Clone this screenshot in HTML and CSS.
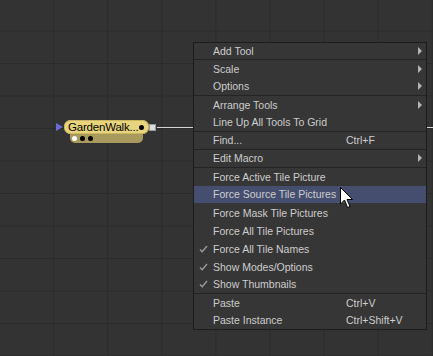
FILE: index.html
```html
<!DOCTYPE html>
<html lang="en">
<head>
  <meta charset="UTF-8">
  <meta name="viewport" content="width=device-width, initial-scale=1.0">
  <title>Flow - Context Menu</title>
  <link rel="stylesheet" href="styles.css">
</head>
<body>
  <!-- Flow canvas -->
  <div class="flow" id="flow">
    <div class="wire"></div>

    <!-- Loader node -->
    <div class="node">
      <span class="node-input"></span>
      <div class="node-tile">
        <span class="node-name">GardenWalk...</span>
        <span class="dot dot-black"></span>
      </div>
      <span class="node-output"></span>
      <div class="node-modes">
        <span class="dot dot-white"></span>
        <span class="dot dot-black"></span>
        <span class="dot dot-black"></span>
      </div>
    </div>

    <!-- Right click menu -->
    <ul class="menu">
      <li class="sep"><span class="check"></span><span class="label">Add Tool</span><span class="key"></span><span class="arrow"></span></li>
      <li><span class="check"></span><span class="label">Scale</span><span class="key"></span><span class="arrow"></span></li>
      <li class="sep"><span class="check"></span><span class="label">Options</span><span class="key"></span><span class="arrow"></span></li>
      <li><span class="check"></span><span class="label">Arrange Tools</span><span class="key"></span><span class="arrow"></span></li>
      <li class="sep"><span class="check"></span><span class="label">Line Up All Tools To Grid</span><span class="key"></span><span></span></li>
      <li class="sep"><span class="check"></span><span class="label">Find...</span><span class="key">Ctrl+F</span><span></span></li>
      <li class="sep"><span class="check"></span><span class="label">Edit Macro</span><span class="key"></span><span class="arrow"></span></li>
      <li><span class="check"></span><span class="label">Force Active Tile Picture</span><span class="key"></span><span></span></li>
      <li class="hover"><span class="check"></span><span class="label">Force Source Tile Pictures</span><span class="key"></span><span></span></li>
      <li><span class="check"></span><span class="label">Force Mask Tile Pictures</span><span class="key"></span><span></span></li>
      <li><span class="check"></span><span class="label">Force All Tile Pictures</span><span class="key"></span><span></span></li>
      <li class="checked"><span class="check"><svg width="9" height="8" viewBox="0 0 9 8"><path d="M1 4.5 L3.2 6.8 L8 1" fill="none" stroke="#9a9a9a" stroke-width="1.4"/></svg></span><span class="label">Force All Tile Names</span><span class="key"></span><span></span></li>
      <li class="checked"><span class="check"><svg width="9" height="8" viewBox="0 0 9 8"><path d="M1 4.5 L3.2 6.8 L8 1" fill="none" stroke="#9a9a9a" stroke-width="1.4"/></svg></span><span class="label">Show Modes/Options</span><span class="key"></span><span></span></li>
      <li class="checked sep"><span class="check"><svg width="9" height="8" viewBox="0 0 9 8"><path d="M1 4.5 L3.2 6.8 L8 1" fill="none" stroke="#9a9a9a" stroke-width="1.4"/></svg></span><span class="label">Show Thumbnails</span><span class="key"></span><span></span></li>
      <li><span class="check"></span><span class="label">Paste</span><span class="key">Ctrl+V</span><span></span></li>
      <li><span class="check"></span><span class="label">Paste Instance</span><span class="key">Ctrl+Shift+V</span><span></span></li>
    </ul>

    <!-- Mouse pointer -->
    <svg class="cursor" width="14" height="22" viewBox="0 0 14 22">
      <path d="M0.5 0.5 L0.5 17 L4.5 13 L7.5 20.5 L10 19.5 L7 12.5 L12.5 12.5 Z" fill="#fff" stroke="#000" stroke-width="1"/>
    </svg>
  </div>
</body>
</html>
```

FILE: styles.css
```css
body {
  margin: 0;
  padding: 0;
  background-color: #333;
  font-family: "Liberation Sans", Arial, sans-serif;
}
.flow {
  position: relative;
  width: 433px;
  height: 356px;
  overflow: hidden;
  background-color: #333;
  background-image:
    linear-gradient(to right, #2b2b2b 1px, transparent 1px),
    linear-gradient(to bottom, #2b2b2b 1px, transparent 1px);
  background-size: 54.1px 32.5px;
  background-position: -1px -2px;
}
.wire {
  position: absolute;
  left: 157px;
  top: 127px;
  width: 276px;
  height: 1px;
  background-color: #d4d4d4;
}

/* node */
.node {
  position: absolute;
  left: 56px;
  top: 120px;
  width: 101px;
  height: 24px;
}
.node-input {
  position: absolute;
  left: 0;
  top: 3px;
  width: 0;
  height: 0;
  border-top: 4px solid transparent;
  border-bottom: 4px solid transparent;
  border-left: 7px solid #6b6bd6;
}
.node-tile {
  position: absolute;
  left: 8px;
  top: 0;
  width: 85px;
  height: 14px;
  box-sizing: border-box;
  padding: 0 4px 0 3px;
  display: flex;
  align-items: center;
  justify-content: space-between;
  background-color: #e8d47c;
  border: 1px solid #c9b660;
  border-radius: 6px;
  z-index: 1;
}
.node-name {
  font-size: 11.5px;
  line-height: 12px;
  color: #000;
  letter-spacing: -0.2px;
}
.node-output {
  position: absolute;
  left: 93px;
  top: 4px;
  width: 7px;
  height: 7px;
  background-color: #dcdcdc;
  border: 1px solid #9a9a9a;
  box-sizing: border-box;
}
.node-modes {
  position: absolute;
  left: 14px;
  top: 12px;
  width: 73px;
  height: 11px;
  box-sizing: border-box;
  padding: 2px 0 0 2px;
  display: flex;
  align-items: center;
  gap: 3px;
  background-color: #a89a5c;
  border-radius: 0 0 5px 5px;
}
.dot {
  width: 5px;
  height: 5px;
  border-radius: 50%;
}
.dot-black {
  background-color: #000;
}
.dot-white {
  background-color: #fff;
}

/* menu */
.menu {
  position: absolute;
  left: 193px;
  top: 42px;
  width: 234px;
  margin: 0;
  padding: 0;
  list-style: none;
  box-sizing: border-box;
  background-color: #363636;
  border: 1px solid #1c1c1c;
  color: #cdcdcd;
  font-size: 10.5px;
}
.menu li {
  height: 18px;
  box-sizing: border-box;
  padding-bottom: 1px;
  display: grid;
  grid-template-columns: 19px 133px 1fr 8px;
  align-items: center;
}
.menu li:first-child,
.menu li:last-child {
  height: 17px;
}
.menu li.sep {
  border-bottom: 1px solid #242424;
}
.menu li.hover {
  background-color: #464e70;
  border-bottom: 1px solid #363636;
}
.check {
  display: flex;
  padding-left: 5px;
}
.label,
.key {
  white-space: nowrap;
}
.arrow {
  width: 0;
  height: 0;
  border-top: 4px solid transparent;
  border-bottom: 4px solid transparent;
  border-left: 4px solid #b4b4b4;
}
.cursor {
  position: absolute;
  left: 340px;
  top: 187px;
}
```
